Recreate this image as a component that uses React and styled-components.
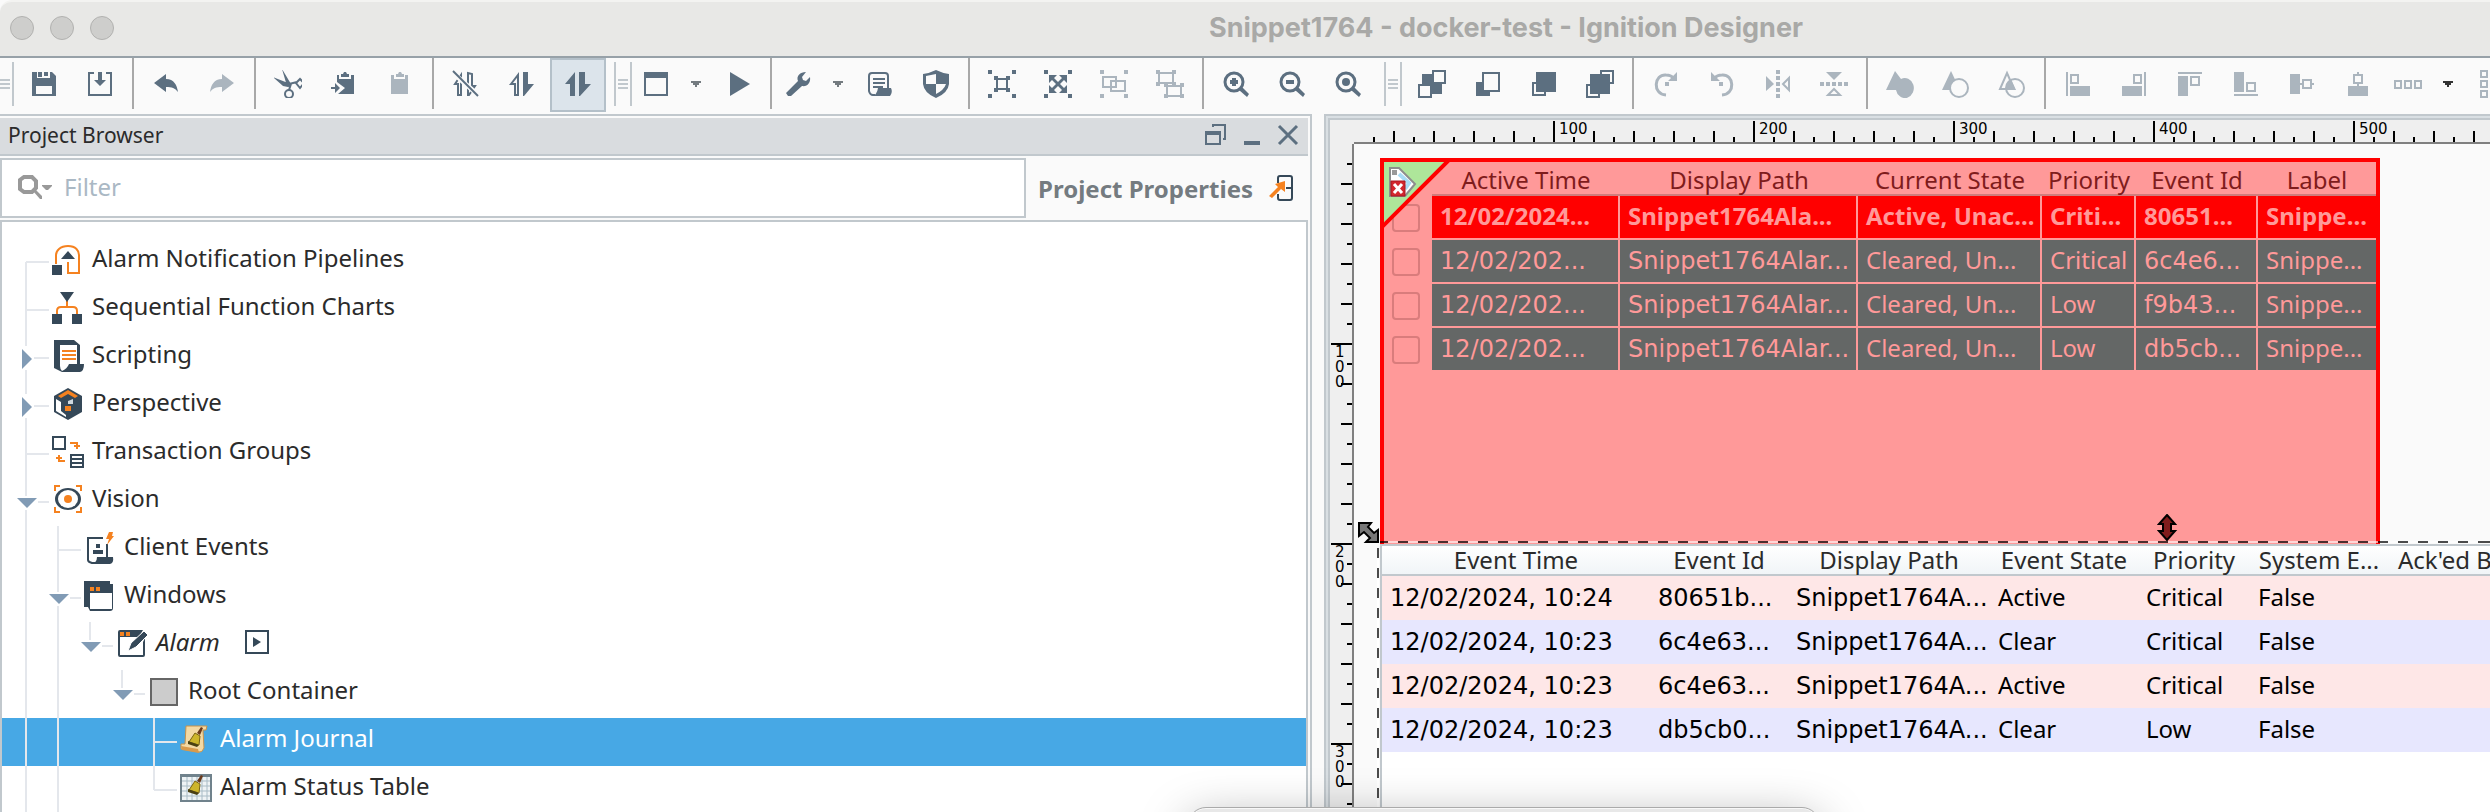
import React from "react";
import styled, { createGlobalStyle, css } from "styled-components";

const C = {
  ink: "#5c6f80",
  faded: "#abb5be",
  line: "#c1c8cd",
  dark: "#354858",
  orange: "#f58220",
  guide: "#e4e7ec",
};
const NUMERIC = '"DejaVu Sans", "Noto Sans", sans-serif';

const Global = createGlobalStyle`
  *, *::before, *::after { box-sizing: border-box; }
  html, body, #root { height: 100%; }
  body { margin: 0; background: #fafafa; overflow: hidden; }
  body, button, input, table { font-family: "Noto Sans", "Open Sans", sans-serif; font-size: 24px; color: #2b2b2b; }
  button { margin: 0; border: 0; padding: 0; background: none; flex: none; }
`;

/* ---------- shell ---------- */
const Shell = styled.div`
  position: relative;
  display: flex;
  flex-direction: column;
  height: 100vh;
  overflow: hidden;
`;
const TitleBar = styled.header`
  position: relative;
  flex: none;
  display: flex;
  align-items: center;
  justify-content: center;
  height: 58px;
  background: #e8e8e6;
  border-top: 2px solid #f3f3f1;
  border-bottom: 2px solid #97a1a8;
  border-top-left-radius: 12px;
`;
const Lights = styled.div`
  position: absolute;
  left: 10px;
  top: 14px;
  display: flex;
  gap: 16px;
`;
const Light = styled.button`
  width: 24px;
  height: 24px;
  border: 1px solid #b2b2b0;
  border-radius: 50%;
  background: #cececc;
`;
const Title = styled.h1`
  margin: 0;
  padding-left: 522px;
  padding-bottom: 2px;
  font: 700 27px/32px Inter, sans-serif;
  color: #a9a9a7;
`;

/* ---------- toolbar ---------- */
const Toolbar = styled.div`
  flex: none;
  display: flex;
  align-items: flex-start;
  height: 56px;
  overflow: hidden;
`;
const Tool = styled.button`
  display: flex;
  justify-content: center;
  width: ${(p) => p.$w || 56}px;
  height: 54px;
  padding: 12px 0;
  color: ${(p) => (p.$off ? C.faded : C.ink)};
  ${(p) => p.$on && css`
    padding: 10px 0;
    background: #dce4eb;
    border: 2px solid #b4c0c9;
  `}
`;
const Rule = styled.span`
  flex: none;
  width: 2px;
  height: 51px;
  margin: 0 4px;
  background: #a8a8a8;
`;
const Grip = styled.span`
  flex: none;
  display: flex;
  align-items: center;
  justify-content: center;
  width: 18px;
  height: 44px;
  margin: 4px 2px 0 8px;
  border: solid ${C.line};
  border-width: 0 2px;
  &::before {
    content: "";
    width: 10px;
    height: 10px;
    background: repeating-linear-gradient(${C.line} 0 2px, transparent 2px 4px);
  }
`;
const FirstGrip = styled(Grip)`
  width: 14px;
  margin-left: 0;
  border-left: 0;
  justify-content: flex-start;
`;

const Svg = ({ s = 28, h, children }) => (
  <svg width={s} height={h || s} viewBox={`0 0 ${s} ${h || s}`} fill="currentColor" aria-hidden="true">
    {children}
  </svg>
);
const line = { fill: "none", stroke: "currentColor", strokeWidth: 2 };

const I = {
  save: <path fillRule="evenodd" d="M2 2h5v6h13V2h2l4 4v20H2zM6 16v8h16v-8zM14 2h4v4h-4zM8 2h4v5H8z" />,
  import: <><path {...line} d="M8 3H3v22h22V3h-5" /><path d="M12 2h4v8h4l-6 6-6-6h4z" /></>,
  undo: <path d="M2 13 14 4v5c8 0 11 6 12 13-3-4-6-5-12-5v5z" />,
  redo: <path d="M26 13 14 4v5C6 9 3 15 2 22c3-4 6-5 12-5v5z" />,
  cut: (
    <>
      <path d="M8-1 17 14l-1 4-3-2zM-1 7l15 6v4l-5-1z" />
      <circle {...line} cx="15" cy="24" r="4" />
      <path {...line} d="M17 14 15 20M15 14l8-2M22 13l4-4 4 4-4 5z" />
    </>
  ),
  copy: (
    <>
      <path d="M7 5h2v4h12V5h3v19H8l7-6-8-6zM11 4h2l1-2h2l1 2h2v3h-8z" />
      <path d="M1 17h4v-4l5 5-5 5v-4H1z" />
    </>
  ),
  paste: <path d="M5 5h3v4h11V5h3v19H5zM10 4h2l1-2h2l1 2h2v3h-8z" />,
  arrowsOff: (
    <>
      <path {...line} d="M3 14 9 5v20H6V14zM16 3v22h1l6-9h-3V4z" />
      <path d="M0 2 27 26" stroke="#fafafa" strokeWidth="5" />
      <path {...line} d="M1 1 26 26" />
    </>
  ),
  arrowsHalf: <><path {...line} d="M3 14 10 5v20H7V14z" /><path d="M15 2h5v12h6L16 26h-1z" /></>,
  arrows: <path d="M1 14 11 2v24H6V14zM15 2h6v12h6L16 26h-1z" />,
  window: <path fillRule="evenodd" d="M2 2h24v24H2zM4 8v16h20V8z" />,
  play: <path d="M6 2 26 14 6 26z" />,
  wrench: <path d="M2 23 14 11c-2-5 2-9 8-9l-4 5 1 3 3 1 4-4c1 6-3 10-8 9L7 26H4z" />,
  script: (
    <>
      <path {...line} d="M9 25H7q-3 0-4-4V6q0-3 3-3h13q3 0 3 3v12" />
      <path d="M7 8h12v2H7zM7 12h12v2H7zM7 16h10v2H7zM12 18h13q2 4-1 8H6q5-1 6-8z" />
    </>
  ),
  shield: (
    <>
      <path d="M14 0q6 3 13 4v10q-1 9-13 14Q2 23 1 14V4q7-1 13-4z" />
      <path fill="#fafafa" d="M14 4v10H4V6zM14 14h10q-2 6-10 10z" />
    </>
  ),
  corners: <path d="M0 0h4v4H0zM24 0h4v4h-4zM0 24h4v4H0zM24 24h4v4h-4z" />,
  zoom: (
    <>
      <circle cx="12" cy="12" r="9" fill="none" stroke="currentColor" strokeWidth="3" />
      <path d="m17 20 3-3 7 7-2 3z" />
    </>
  ),
  toFrontBack: (
    <>
      <path d="M4 4h20v20H4z" />
      <path fill="#fafafa" stroke="currentColor" strokeWidth="2" d="M15 1h12v12H15zM1 15h12v12H1z" />
    </>
  ),
  back: <><path d="M2 12h14v14H2z" /><path fill="#fafafa" stroke="currentColor" strokeWidth="2" d="M9 3h16v18H9z" /></>,
  front: <><path {...line} d="M3 13h12v12H3z" /><path d="M6 2h20v20H6z" /></>,
  toFront: <><path {...line} d="M15 1h12v12H15zM1 15h12v12H1z" /><path d="M4 4h20v20H4z" /></>,
  rotR: <><path {...line} strokeWidth="3" d="M14 25C0 24 2 4 14 5q5 0 7 3" /><path d="M25 2v9h-9zM13 12h4v4h-4z" /></>,
  rotL: <><path {...line} strokeWidth="3" d="M14 25C28 24 26 4 14 5q-5 0-7 3" /><path d="M3 2v9h9zM11 12h4v4h-4z" /></>,
  flipH: <><path d="M2 6 10 14 2 21zM12 0h4v4h-4zM12 6h4v4h-4zM12 12h4v4h-4zM12 18h4v4h-4zM12 24h4v4h-4z" /><path {...line} d="M25 8v12l-6-6z" /></>,
  flipV: <><path d="M6 2h16l-8 8zM0 12h4v4H0zM6 12h4v4H6zM12 12h4v4h-4zM18 12h4v4h-4zM24 12h4v4h-4z" /><path {...line} d="M8 25h12l-6-6z" /></>,
  union: <path d="M9 1 15 9a9 10 0 1 1-5 11H0z" />,
  subtract: <><path d="M9 1 18 20H0z" /><circle cx="17" cy="18" r="9" fill="#fafafa" stroke="currentColor" strokeWidth="2" /></>,
  intersect: <><path {...line} d="M9 3 16 19H2z" /><circle {...line} cx="17" cy="18" r="9" /><path d="M13 9 18 20H8q0-7 5-11z" /></>,
  alL: <><path d="M2 2h2v24H2zM6 16h20v10H6z" /><path {...line} d="M7 5h7v8H7z" /></>,
  alR: <><path d="M24 2h2v24h-2zM2 16h20v10H2z" /><path {...line} d="M14 5h7v8h-7z" /></>,
  alT: <><path d="M2 2h24v2H2zM2 6h10v20H2z" /><path {...line} d="M15 7h8v8h-8z" /></>,
  alB: <><path d="M2 24h24v2H2zM2 2h10v20H2z" /><path {...line} d="M15 13h8v8h-8z" /></>,
  alM: <><path d="M2 4h10v20H2zM12 13h3v2h-3zM23 13h3v2h-3z" /><path {...line} d="M15 10h8v8h-8z" /></>,
  alC: <><path d="M4 16h20v10H4zM13 2h2v3h-2zM13 13h2v3h-2z" /><path {...line} d="M10 5h8v8h-8z" /></>,
  distH: <path {...line} d="M1 11h6v7H1zM11 11h6v7h-6zM21 11h6v7h-6z" />,
  distV: <path {...line} d="M11 1h6v6h-6zM11 11h6v6h-6zM11 21h6v6h-6z" />,
};
const icons = {
  ...I,
  group1: <>{I.corners}<path {...line} d="M9 9h10v10H9z" /><path d="M6 6h4v4H6zM18 6h4v4h-4zM6 18h4v4H6zM18 18h4v4h-4z" /></>,
  group2: <>{I.corners}<path d="M5 5h8l-3 3 4 4 4-4-3-3h8v8l-3-3-4 4 4 4 3-3v8h-8l3-3-4-4-4 4 3 3H5v-8l3 3 4-4-4-4-3 3z" /></>,
  group3: <>{I.corners}<path {...line} d="M3 7h13v10H3zM11 21V11h14v10z" /></>,
  group4: <><path {...line} d="M3 3h14v10H3zM11 16h14v10H11z" /><path d="M0 0h4v4H0zM16 0h4v4h-4zM0 12h4v4H0zM16 12h4v4h-4zM8 24h4v4H8zM24 24h4v4h-4zM24 13h4v4h-4zM8 13h4v4H8z" /></>,
  zoomIn: <>{I.zoom}<path d="M10 8h4v2h2v4h-2v2h-4v-2H8v-4h2z" /></>,
  zoomOut: <>{I.zoom}<path d="M8 10h8v4H8z" /></>,
  zoomFit: <>{I.zoom}<circle cx="12" cy="12" r="4" /></>,
};
const Caret = ({ color }) => (
  <Svg><path fill={color} d="M11 11h10v2h-2v2h-2v2h-2v-2h-2v-2h-2z" /></Svg>
);

const TOOLS = [
  "save:Save", "import:Import", "|", "undo:Undo", "redo:Redo:off", "|",
  "cut:Cut", "copy:Copy", "paste:Paste:off", "|",
  "arrowsOff:Comm off", "arrowsHalf:Comm read only", "arrows:Comm read write:on", "#",
  "window:New window:44", "caret:Window menu:32", "play:Preview", "|",
  "wrench:Tools:44", "caret:Tools menu:32", "script:Console", "shield:Security", "|",
  "group1:Group", "group2:Ungroup", "group3:Enter group:off", "group4:Leave group:off", "|",
  "zoomIn:Zoom in", "zoomOut:Zoom out", "zoomFit:Zoom to fit", "#",
  "toFrontBack:Send to back", "back:Send backward", "front:Bring forward", "toFront:Bring to front", "|",
  "rotR:Rotate clockwise:off", "rotL:Rotate counterclockwise:off", "flipH:Flip horizontal:off", "flipV:Flip vertical:off", "|",
  "union:Union:off", "subtract:Subtract:off", "intersect:Intersect:off", "|",
  "alL:Align left:off", "alR:Align right:off", "alT:Align top:off", "alB:Align bottom:off",
  "alM:Align middle:off", "alC:Align center:off", "distH:Distribute horizontally:44:off", "caretDark:Distribute menu:32",
  "distV:Distribute vertically:44:off",
];
const ToolItem = ({ spec }) => {
  if (spec === "|") return <Rule />;
  if (spec === "#") return <Grip />;
  const [icon, label, ...o] = spec.split(":");
  return (
    <Tool aria-label={label} $off={o.includes("off")} $on={o.includes("on")} $w={o.find((x) => +x)}>
      {icon === "caret" ? <Caret color="#747b80" /> : icon === "caretDark" ? <Caret color="#333" /> : <Svg>{icons[icon]}</Svg>}
    </Tool>
  );
};

/* ---------- work area ---------- */
const Work = styled.main`
  flex: 1;
  min-height: 0;
  display: grid;
  grid-template-columns: minmax(0, 1312fr) minmax(0, 1166fr);
  gap: 12px;
`;
const Browser = styled.section`
  display: flex;
  flex-direction: column;
  gap: 2px;
  min-height: 0;
  padding: 2px 2px 0 0;
  border: solid ${C.line};
  border-width: 2px 2px 0 0;
`;
const PanelHead = styled.div`
  flex: none;
  display: flex;
  align-items: center;
  height: 38px;
  padding: 0 9px 2px 8px;
  background: #d9dcdf;
  border-bottom: 2px solid ${C.line};
  h2 { flex: 1; margin: 0; font-size: 21px; font-weight: 400; line-height: 30px; }
`;
const HeadButton = styled.button`
  display: flex;
  margin-left: 16px;
  color: ${C.ink};
`;
const FilterRow = styled.div`
  flex: none;
  display: flex;
  height: 60px;
`;
const FilterBox = styled.label`
  flex: 1;
  display: flex;
  align-items: center;
  gap: 12px;
  padding: 0 0 2px 16px;
  background: #fff;
  border: 2px solid ${C.line};
  color: #999;
`;
const FilterInput = styled.input`
  flex: 1;
  min-width: 0;
  border: 0;
  padding: 0;
  outline: 0;
  background: none;
  line-height: 32px;
  &::placeholder { color: #aab8c4; opacity: 1; }
`;
const PropsLink = styled.a`
  flex: none;
  display: flex;
  align-items: center;
  justify-content: space-between;
  width: 282px;
  padding: 0 14px 0 12px;
  font-weight: 700;
  font-size: 24px;
  color: #747b80;
  text-decoration: none;
  white-space: nowrap;
`;
const Tree = styled.ul`
  flex: 1;
  min-height: 0;
  overflow: hidden;
  margin: 0;
  padding: 16px 0 0;
  list-style: none;
  background: #fff;
  border: solid ${C.line};
  border-width: 2px 2px 0 2px;
`;
const TreeRow = styled.li`
  display: flex;
  height: 48px;
  padding-left: 8px;
  font-style: ${(p) => (p.$italic ? "italic" : "normal")};
  color: ${(p) => (p.$sel ? "#fff" : "#2b2b2b")};
  background: ${(p) => (p.$sel ? "#47a8e5" : "none")};
`;
const Guide = styled.span`
  flex: none;
  width: 32px;
  background: ${(p) => (p.$show ? `linear-gradient(${C.guide}, ${C.guide}) 15px 0 / 2px 100% no-repeat` : "none")};
`;
const RowIcon = styled.span`
  flex: none;
  width: 42px;
  padding: 6px 0 0 1px;
`;
const RowText = styled.span`
  line-height: 40px;
  white-space: nowrap;
`;
const OpenButton = styled.button`
  display: flex;
  align-self: flex-start;
  margin: 7px 0 0 24px;
`;

const Elbow = ({ first, last, state }) => {
  const gap = state === "closed" ? [12, 36] : state === "open" ? [18, 32] : [24, 24];
  const stub = state === "closed" ? 24 : state === "open" ? 28 : 16;
  return (
    <Svg s={40} h={48}>
      <g fill={C.guide}>
        {!first && <rect x="15" width="2" height={gap[0]} />}
        {!last && <rect x="15" y={gap[1]} width="2" height={48 - gap[1]} />}
        <rect x={stub} y="23" width={39 - stub} height="2" />
      </g>
      {state === "closed" && <path fill="#819bb5" d="M12 15v20l10-10z" />}
      {state === "open" && <path fill="#819bb5" d="M7 20h20L17 30z" />}
    </Svg>
  );
};

const bell = <><path fill="#6b3a1c" d="m18 9 4-6 2 1-3 7z" /><path fill="#cdb52b" stroke="#7a6512" d="m16 9 5 3-1 9-10-3z" /><path fill="#4a4012" d="m9 17 11 4-2 2-9-3z" /></>;
const N = {
  pipelines: (
    <>
      <path fill="none" stroke={C.orange} strokeWidth="2" d="M5 20v-9C5 7 9 2 17 2s11 5 11 9v18H17V18" />
      <path fill={C.dark} d="M17 7l7 8H10zM1 21h10v10H1z" />
    </>
  ),
  sfc: (
    <>
      <path fill="none" stroke={C.orange} strokeWidth="2" d="M16 9v7M6 22v-3q0-4 4-4h12q4 0 4 4v3" />
      <path fill={C.dark} d="M9 0h14l-7 10zM1 22h10v10H1zM21 22h10v10H21z" />
    </>
  ),
  scripting: (
    <>
      <path fill={C.dark} d="M3 0h20l6 5v19h4q0 7-4 8H11l-8-4z" />
      <path fill="#fff" d="M9 5h17v19h-8q-2 5-7 7-2-2-2-5z" />
      <path fill={C.orange} d="M11 10h14v2H11zM11 14h14v2H11zM11 18h14v2H11z" />
    </>
  ),
  perspective: (
    <>
      <path fill={C.dark} d="m17 0 14 8v16l-14 8-14-8V8z" />
      <path fill="#fff" d="m5 11 5 3v9l5 4v2L5 23z" />
      <path fill={C.orange} d="m17 2 10 6-3 2-7-4-7 4-3-2zM14 18h6v5h-6z" />
      <path fill="#cfd8df" d="m17 13 5-2v5h-5z" />
    </>
  ),
  transaction: (
    <>
      <path fill="none" stroke={C.dark} strokeWidth="2" d="M2 1h12v12H2z" />
      <path fill={C.dark} d="M19 18h14v14H19z" />
      <path fill="#fff" d="M21 20h10v2H21zM21 24h10v2H21zM21 28h10v2H21z" />
      <path fill="none" stroke={C.orange} strokeWidth="2" d="M19 7h7v6M23 10h6M14 25H8v-6M5 22h6" />
    </>
  ),
  vision: (
    <>
      <path fill="none" stroke={C.orange} strokeWidth="2" d="M4 7V2h5M25 2h5v5M30 23v5h-5M9 28H4v-5" />
      <ellipse cx="17" cy="15" rx="13" ry="11" fill={C.dark} />
      <ellipse cx="17" cy="15" rx="10" ry="9" fill="#fff" />
      <circle cx="17" cy="15" r="4" fill={C.orange} />
    </>
  ),
  client: (
    <>
      <path fill="none" stroke={C.dark} strokeWidth="2" d="M20 6H5v22q0 2 4 3h6M24 12v14" />
      <path fill={C.dark} d="M14 25h16q1 6-3 7H8q6-1 6-7zM13 12h4v4h-4zM10 18h10v4H10z" />
      <path fill={C.orange} d="M26 0h4l-1 4h2l-7 9 2-6h-3z" />
    </>
  ),
  windows: (
    <>
      <path fill={C.dark} d="M1 1h26v3h3v24q0 3-3 3H7l-2-4H1z" />
      <path fill="#fff" d="M7 13h22v16H7z" />
      <path fill={C.orange} d="M7 7h4v4H7zM13 7h4v4h-4z" />
    </>
  ),
  alarm: (
    <>
      <path fill={C.dark} fillRule="evenodd" d="M5 2h23l-4 7H5v18h23V14l2-4v17q0 2-2 2H5q-2 0-2-2V4q0-2 2-2z" />
      <path fill={C.dark} stroke="#fff" d="m13 23 3-8L29 3l4 4-12 12z" />
      <path fill={C.orange} d="M5 4h4v4H5zM11 4h4v4h-4z" />
    </>
  ),
  container: <path fill="#ccc" stroke="#666" strokeWidth="2" d="M4 3h26v26H4z" />,
  journal: (
    <>
      <path fill="#f3d9a4" stroke="#c8924a" d="M7 2h21l-1 4h-3l1 18q-2 5-5 4L2 25v-5h4z" />
      <path fill="#d89a4c" d="m2 22 17 3 1 4L3 26z" />
      {bell}
    </>
  ),
  status: (
    <>
      <path fill="#eef3f5" stroke="#70828c" strokeWidth="2" d="M2 3h30v26H2z" />
      <path stroke="#a9bcc6" fill="none" d="M3 9h28M3 14h28M3 19h28M3 24h28M8 4v24M13 4v24M18 4v24M23 4v24M28 4v24" />
      <path fill="#70828c" d="M2 2h30v3H2z" />
      {bell}
    </>
  ),
};

const NODES = [
  { t: "Alarm Notification Pipelines", i: "pipelines", d: 0, first: true },
  { t: "Sequential Function Charts", i: "sfc", d: 0 },
  { t: "Scripting", i: "scripting", d: 0, s: "closed" },
  { t: "Perspective", i: "perspective", d: 0, s: "closed" },
  { t: "Transaction Groups", i: "transaction", d: 0 },
  { t: "Vision", i: "vision", d: 0, s: "open" },
  { t: "Client Events", i: "client", d: 1 },
  { t: "Windows", i: "windows", d: 1, s: "open" },
  { t: "Alarm", i: "alarm", d: 2, s: "open", last: true, italic: true, open: true },
  { t: "Root Container", i: "container", d: 3, s: "open", last: true },
  { t: "Alarm Journal", i: "journal", d: 4, sel: true },
  { t: "Alarm Status Table", i: "status", d: 4, last: true },
];

const ProjectBrowser = () => (
  <Browser>
    <PanelHead>
      <h2>Project Browser</h2>
      <HeadButton aria-label="Float"><Svg s={22}><path {...line} d="M8 3V1h12v14h-2M1 8h14v12H1z" /><path d="M1 7h14v4H1z" /></Svg></HeadButton>
      <HeadButton aria-label="Minimize"><Svg s={18} h={22}><path d="M1 17h16v4H1z" /></Svg></HeadButton>
      <HeadButton aria-label="Close"><Svg s={22}><path {...line} strokeWidth="3" d="m2 2 18 18M20 2 2 20" /></Svg></HeadButton>
    </PanelHead>
    <FilterRow>
      <FilterBox>
        <Svg s={34} h={26}>
          <path fill="none" stroke="currentColor" strokeWidth="4" d="M6 3h8l4 4v7l-4 4H6l-4-3V6z" />
          <path d="m15 17 3-1 6 6v3h-2zM24 11h10v1l-4 4h-2l-4-4z" />
        </Svg>
        <FilterInput aria-label="Filter" placeholder="Filter" />
      </FilterBox>
      <PropsLink href="#properties">
        Project Properties
        <Svg s={26}>
          <path fill="none" stroke={C.dark} strokeWidth="2" d="M10 8V3q0-2 2-2h10q2 0 2 2v20q0 2-2 2H12q-2 0-2-2v-4M18 13h6" />
          <path fill={C.orange} d="M17 6v11l-4-3-9 9-3-2 9-9-3-3z" />
        </Svg>
      </PropsLink>
    </FilterRow>
    <Tree>
      {NODES.map((n) => (
        <TreeRow key={n.t} $sel={n.sel} $italic={n.italic}>
          {Array.from({ length: n.d }, (_, k) => <Guide key={k} $show={k < 2} />)}
          <Elbow first={n.first} last={n.last} state={n.s} />
          <RowIcon><Svg s={34}>{N[n.i]}</Svg></RowIcon>
          <RowText>{n.t}</RowText>
          {n.open && (
            <OpenButton aria-label="Preview window">
              <Svg s={26}><path fill="#fff" stroke={C.dark} strokeWidth="2" d="M2 2h22v22H2z" /><path fill={C.dark} d="M9 8v10l8-5z" /></Svg>
            </OpenButton>
          )}
        </TreeRow>
      ))}
    </Tree>
  </Browser>
);

/* ---------- designer ---------- */
const Designer = styled.section`
  min-width: 0;
  min-height: 0;
  display: grid;
  grid-template: 24px minmax(0, 1fr) / 24px minmax(0, 1fr);
  background: #efefef;
  border: solid ${C.line};
  border-width: 2px 0 0 2px;
  box-shadow: inset 2px 2px #d9dfe3, inset 4px 4px ${C.line};
  padding: 4px 0 0 4px;
`;
const TopRuler = styled.div`
  grid-column: 2;
  display: flex;
  overflow: hidden;
  border-bottom: 2px solid #808080;
`;
const SideRuler = styled.div`
  grid-column: 1;
  grid-row: 2;
  display: flex;
  flex-direction: column;
  overflow: hidden;
  border-right: 2px solid #808080;
`;
const tick = (deg, on, every) => `repeating-linear-gradient(${deg}, #000 0 ${on}px, transparent ${on}px ${every}px)`;
const TopCell = styled.span`
  flex: 0 0 200px;
  padding-left: 6px;
  font: 15px/18px ${NUMERIC};
  color: #000;
  background:
    linear-gradient(#000, #000) 0 1px / 2px 21px no-repeat,
    ${tick("90deg", 2, 40)} 0 100% / 100% 11px no-repeat,
    ${tick("90deg", 2, 20)} 0 100% / 100% 5px no-repeat;
  ${(p) => p.$first && css`
    flex-basis: 199px;
    background:
      ${tick("90deg", 2, 40)} 39px 100% / 100% 11px no-repeat,
      ${tick("90deg", 2, 20)} 19px 100% / 100% 5px no-repeat;
  `}
`;
const SideCell = styled.span`
  flex: 0 0 200px;
  display: flex;
  flex-direction: column;
  padding: 2px 0 0 5px;
  font: 15px/15px ${NUMERIC};
  color: #000;
  background:
    linear-gradient(#000, #000) 100% 0 / 21px 2px no-repeat,
    ${tick("180deg", 2, 40)} 100% 0 / 11px 100% no-repeat,
    ${tick("180deg", 2, 20)} 100% 0 / 5px 100% no-repeat;
  ${(p) => p.$first && css`
    flex-basis: 199px;
    background:
      ${tick("180deg", 2, 40)} 100% 39px / 11px 100% no-repeat,
      ${tick("180deg", 2, 20)} 100% 19px / 5px 100% no-repeat;
  `}
`;
const Canvas = styled.div`
  grid-column: 2;
  grid-row: 2;
  position: relative;
  overflow: hidden;
  display: flex;
  flex-direction: column;
  padding: 14px 0 0 26px;
  background: #fafafa;
`;
const StatusBox = styled.div`
  position: relative;
  flex: none;
  width: 1000px;
  height: 386px;
  background: #ff9999;
  border: solid #f00;
  border-width: 4px 4px 0 4px;
`;
const Table = styled.table`
  table-layout: fixed;
  border-collapse: separate;
  border-spacing: 0;
  width: 100%;
  th, td { white-space: nowrap; text-align: left; }
  th { padding: 0; text-align: center; font-weight: 400; }
  td { height: 44px; vertical-align: baseline; }
`;
const StatusTable = styled(Table)`
  th { height: 34px; padding-top: 4px; line-height: 26px; color: #7f1c1c; border-bottom: 2px solid #d07c7c; }
  th:first-child { border-bottom-color: transparent; }
  td { line-height: 38px; color: #f99; border: solid #f99; border-width: 0 2px 2px 0; padding: 1px 0 0 8px; background: #646766; }
  tr > td:last-child { border-right: 0; }
  td:first-child { background: none; border-right: 0; vertical-align: middle; }
`;
const StatusRow = styled.tr`
  font-weight: ${(p) => (p.$active ? 700 : 400)};
  ${(p) => p.$active && css`td:not(:first-child) { background: #f00; }`}
  ${(p) => !p.$active && css`td:nth-child(2), td:nth-child(3), td:nth-child(6) { font-family: ${NUMERIC}; }`}
`;
const Check = styled.input`
  appearance: none;
  display: block;
  width: 28px;
  height: 28px;
  margin: 0;
  border: 2px solid #d97c7c;
  border-radius: 4px;
`;
const TagCorner = styled.span`
  position: absolute;
  left: 0;
  top: 0;
  display: flex;
`;
const JournalBox = styled.div`
  flex: 1;
  min-height: 0;
  overflow: hidden;
  background: #fff;
  border: solid ${C.line};
  border-width: 2px 0 0 2px;
`;
const JournalTable = styled(Table)`
  width: 1144px;
  thead tr { background: linear-gradient(#fff, #f0f4f7); }
  th { height: 30px; line-height: 28px; border-bottom: 2px solid ${C.line}; }
  th:last-child { text-align: left; padding-left: 10px; }
  td { line-height: 40px; color: #000; padding: 1px 0 0 8px; }
  td:nth-child(-n + 3) { font-family: ${NUMERIC}; }
`;
const JournalRow = styled.tr`
  background: ${(p) => (p.$active ? "#fee7e7" : "#e7e7fe")};
`;
const DashTop = styled.span`
  position: absolute;
  left: 26px;
  right: 0;
  top: 397px;
  height: 2px;
  background: repeating-linear-gradient(90deg, rgba(0,0,0,.7) 0 10px, rgba(255,255,255,.6) 10px 20px) -2px 0;
`;
const DashLeft = styled.span`
  position: absolute;
  left: 23px;
  top: 404px;
  bottom: 0;
  width: 2px;
  background: repeating-linear-gradient(rgba(0,0,0,.7) 0 10px, #fff 10px 20px);
`;
const CornerHandle = styled.span`
  position: absolute;
  left: 4px;
  top: 378px;
  display: flex;
`;
const EdgeHandle = styled.span`
  position: absolute;
  left: 803px;
  top: 370px;
  display: flex;
`;

const STATUS = [
  ["12/02/2024...", "Snippet1764Ala...", "Active, Unac...", "Criti...", "80651...", "Snippe..."],
  ["12/02/202...", "Snippet1764Alar...", "Cleared, Un...", "Critical", "6c4e6...", "Snippe..."],
  ["12/02/202...", "Snippet1764Alar...", "Cleared, Un...", "Low", "f9b43...", "Snippe..."],
  ["12/02/202...", "Snippet1764Alar...", "Cleared, Un...", "Low", "db5cb...", "Snippe..."],
];
const JOURNAL = [
  ["12/02/2024, 10:24", "80651b...", "Snippet1764A...", "Active", "Critical", "False", ""],
  ["12/02/2024, 10:23", "6c4e63...", "Snippet1764A...", "Clear", "Critical", "False", ""],
  ["12/02/2024, 10:23", "6c4e63...", "Snippet1764A...", "Active", "Critical", "False", ""],
  ["12/02/2024, 10:23", "db5cb0...", "Snippet1764A...", "Clear", "Low", "False", ""],
];
const Cols = ({ w }) => <colgroup>{w.map((x, i) => <col key={i} width={x} />)}</colgroup>;

const Workspace = () => (
  <Designer>
    <TopRuler>
      <TopCell $first />
      {[100, 200, 300, 400, 500].map((n) => <TopCell key={n}>{n}</TopCell>)}
    </TopRuler>
    <SideRuler>
      <SideCell $first />
      {["100", "200", "300"].map((n) => <SideCell key={n}>{[...n].map((d, i) => <span key={i}>{d}</span>)}</SideCell>)}
    </SideRuler>
    <Canvas>
      <StatusBox>
        <StatusTable>
          <Cols w={[48, 188, 238, 184, 94, 122, 118]} />
          <thead>
            <tr>
              <th />
              {["Active Time", "Display Path", "Current State", "Priority", "Event Id", "Label"].map((h) => <th key={h}>{h}</th>)}
            </tr>
          </thead>
          <tbody>
            {STATUS.map((r, i) => (
              <StatusRow key={i} $active={i === 0}>
                <td><Check type="checkbox" aria-label={`Select alarm ${i + 1}`} /></td>
                {r.map((c, k) => <td key={k}>{c}</td>)}
              </StatusRow>
            ))}
          </tbody>
        </StatusTable>
        <TagCorner>
          <Svg s={68} h={72}>
            <path fill="#aee69a" d="M0 0h62L0 62z" />
            <path fill="none" stroke="#f00" strokeWidth="4" d="M66-3-2 65" />
            <path fill="#fff" stroke="#8d8d8d" strokeWidth="2" d="M6 6h9l16 16-10 12H6z" />
            <path fill="none" stroke="#a9dcf5" strokeWidth="4" d="m15 12 10 9-4 6" />
            <path fill="#999" d="M8 8h5v5H8z" />
            <path fill="#d3272e" stroke="#a81820" d="M7 19h14v15H7z" />
            <path stroke="#fff" strokeWidth="3" d="m10 22 8 9M18 22l-8 9" />
          </Svg>
        </TagCorner>
      </StatusBox>
      <JournalBox>
        <JournalTable>
          <Cols w={[268, 138, 202, 148, 112, 138, 138]} />
          <thead>
            <tr>{["Event Time", "Event Id", "Display Path", "Event State", "Priority", "System E...", "Ack'ed By"].map((h) => <th key={h}>{h}</th>)}</tr>
          </thead>
          <tbody>
            {JOURNAL.map((r, i) => (
              <JournalRow key={i} $active={r[3] === "Active"}>{r.map((c, k) => <td key={k}>{c}</td>)}</JournalRow>
            ))}
          </tbody>
        </JournalTable>
      </JournalBox>
      <DashTop />
      <DashLeft />
      <CornerHandle>
        <Svg s={21} h={21}><path fill="#777" stroke="#000" strokeWidth="2" d="M1 1h12l-3 4 6 6 4-3v12H8l4-4-6-6-5 4z" /></Svg>
      </CornerHandle>
      <EdgeHandle>
        <Svg s={21} h={27}><path fill="#801c1c" stroke="#000" strokeWidth="2" d="m10 1 8 9h-4v7h4l-8 9-8-9h4v-7H2z" /></Svg>
      </EdgeHandle>
    </Canvas>
  </Designer>
);

/* Top edge of a dialog that rises from below the window */
const Sheet = styled.div`
  position: absolute;
  bottom: -34px;
  left: 1188px;
  width: 632px;
  height: 39px;
  background: #e8e8e8;
  border: 1px solid #aaa;
  border-radius: 18px;
  box-shadow: 0 16px 50px rgba(0, 0, 0, 0.4), inset 0 1px #f8f8f8;
`;

export default function App() {
  return (
    <Shell>
      <Global />
      <TitleBar>
        <Lights>
          <Light aria-label="Close" />
          <Light aria-label="Minimize" />
          <Light aria-label="Zoom" />
        </Lights>
        <Title>Snippet1764 - docker-test - Ignition Designer</Title>
      </TitleBar>
      <Toolbar role="toolbar">
        <FirstGrip />
        {TOOLS.map((t, i) => <ToolItem key={i} spec={t} />)}
      </Toolbar>
      <Work>
        <ProjectBrowser />
        <Workspace />
      </Work>
      <Sheet />
    </Shell>
  );
}
